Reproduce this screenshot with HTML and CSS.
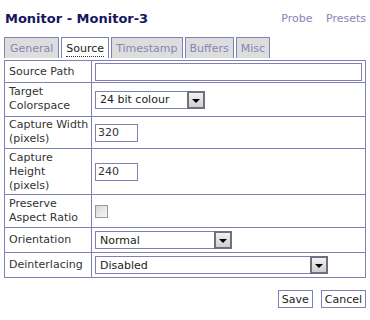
FILE: index.html
```html
<!DOCTYPE html>
<html lang="en">
<head>
    <meta charset="UTF-8">
    <title>Monitor - Monitor-3</title>
    <link rel="stylesheet" href="styles.css">
</head>
<body>

    <div class="page">
        <div class="header">
            <h2>Monitor - Monitor-3</h2>
            <div class="links">
                <a href="#">Probe</a>
                <a href="#">Presets</a>
            </div>
        </div>

        <!-- Tabs -->
        <ul class="tabs">
            <li>General</li>
            <li class="active"><span>Source</span></li>
            <li>Timestamp</li>
            <li>Buffers</li>
            <li>Misc</li>
        </ul>

        <table class="settings">
            <tr class="row-path">
                <th>Source Path</th>
                <td><input type="text" class="text-wide"></td>
            </tr>
            <tr class="row-colour">
                <th>Target Colorspace</th>
                <td>
                    <div class="select sel-colour">
                        <select><option>24 bit colour</option></select>
                        <span class="drop"><svg width="8" height="4" viewBox="0 0 8 4"><path d="M0 0H8L4 4Z" fill="#000"/></svg></span>
                    </div>
                </td>
            </tr>
            <tr class="row-width">
                <th>Capture Width (pixels)</th>
                <td><input type="text" class="text-small" value="320"></td>
            </tr>
            <tr class="row-height">
                <th>Capture Height<br>(pixels)</th>
                <td><input type="text" class="text-small" value="240"></td>
            </tr>
            <tr class="row-ratio">
                <th>Preserve Aspect Ratio</th>
                <td><span class="checkbox"></span></td>
            </tr>
            <tr class="row-select">
                <th>Orientation</th>
                <td>
                    <div class="select sel-orient">
                        <select><option>Normal</option></select>
                        <span class="drop"><svg width="8" height="4" viewBox="0 0 8 4"><path d="M0 0H8L4 4Z" fill="#000"/></svg></span>
                    </div>
                </td>
            </tr>
            <tr class="row-select">
                <th>Deinterlacing</th>
                <td>
                    <div class="select sel-deint">
                        <select><option>Disabled</option></select>
                        <span class="drop"><svg width="8" height="4" viewBox="0 0 8 4"><path d="M0 0H8L4 4Z" fill="#000"/></svg></span>
                    </div>
                </td>
            </tr>
        </table>

        <div class="buttons">
            <button>Save</button>
            <button>Cancel</button>
        </div>
    </div>

</body>
</html>
```

FILE: styles.css
```css
body {
    margin: 0;
    background: #ffffff;
    font-family: 'DejaVu Sans', Verdana, sans-serif;
    font-size: 11px;
    color: #333333;
}

.page {
    padding: 0 4px;
}

.header {
    display: flex;
    justify-content: space-between;
    align-items: center;
    padding: 10px 0 0 1px;
    height: 16px;
}

.header h2 {
    margin: 0;
    font-size: 13px;
    font-weight: bold;
    color: #161660;
}

.links a {
    color: #8585b8;
    text-decoration: none;
    margin-left: 10px;
}

/* Tabs */
.tabs {
    list-style: none;
    margin: 11px 0 0 0;
    padding: 0;
    display: flex;
    gap: 2px;
}

.tabs li {
    border: 1px solid #8080b8;
    border-bottom: none;
    background: #dddddd;
    color: #8585b8;
    padding: 0 4px;
    height: 20px;
    line-height: 21px;
}

.tabs li:first-child {
    padding: 0 5px;
}

.tabs li.active {
    background: #ffffff;
    color: #222222;
}

.tabs li.active span {
    border-bottom: 1px dotted #333333;
    padding-bottom: 1px;
}

/* Settings table */
.settings {
    width: 100%;
    margin-top: 2px;
    border-collapse: collapse;
    border: 1px solid #8080b8;
}

.settings th,
.settings td {
    border: 1px solid #8080b8;
    padding: 2px 3px;
    line-height: 14px;
    text-align: left;
    vertical-align: middle;
}

.settings th {
    font-weight: normal;
    width: 84px;
    padding-left: 4px;
    padding-right: 1px;
}

.row-path th { padding-top: 3px; padding-bottom: 3px; }
.row-path td { padding-top: 2px; padding-bottom: 1px; }
.row-colour th { padding-top: 2px; padding-bottom: 3px; }
.row-width th { padding-top: 1px; padding-bottom: 2px; }
.row-height th { padding-top: 2px; padding-bottom: 1px; }
.row-ratio th { padding-top: 2px; padding-bottom: 2px; }
.row-select th { padding-top: 5px; padding-bottom: 5px; }

input[type="text"] {
    font-family: 'DejaVu Sans', Verdana, sans-serif;
    font-size: 11px;
    color: #333333;
    border: 1px solid #8080b8;
    box-sizing: border-box;
    height: 18px;
    padding: 0 2px;
    margin: 0;
    display: block;
}

.text-wide {
    width: 267px;
}

.text-small {
    width: 43px;
}

.checkbox {
    display: block;
    width: 11px;
    height: 11px;
    border: 1px solid #9a9a9a;
    background: linear-gradient(135deg, #d6d6d6, #f8f8f8);
}

/* Select boxes */
.select {
    position: relative;
    height: 18px;
}

.select select {
    appearance: none;
    -webkit-appearance: none;
    box-sizing: border-box;
    height: 18px;
    width: 100%;
    margin: 0;
    padding: 0 0 0 4px;
    border: 1px solid #8080b8;
    border-radius: 0;
    background: #ffffff;
    font-family: 'DejaVu Sans', Verdana, sans-serif;
    font-size: 11px;
    color: #222222;
}

.sel-colour { width: 110px; }
.sel-orient { width: 137px; }
.sel-deint { width: 233px; }

.drop {
    position: absolute;
    top: 0;
    right: 0;
    box-sizing: border-box;
    width: 18px;
    height: 18px;
    border: 2px solid #6f6f7f;
    background: linear-gradient(to bottom, #f2f2f2, #cfcfcf);
    display: flex;
    align-items: center;
    justify-content: center;
    padding-top: 2px;
}

.buttons {
    display: flex;
    justify-content: flex-end;
    gap: 8px;
    margin-top: 12px;
}

.buttons button {
    font-family: 'DejaVu Sans', Verdana, sans-serif;
    font-size: 11px;
    color: #222222;
    background: #ffffff;
    border: 1px solid #8080b8;
    height: 18px;
    padding: 0 3px;
    margin: 0;
}
```
